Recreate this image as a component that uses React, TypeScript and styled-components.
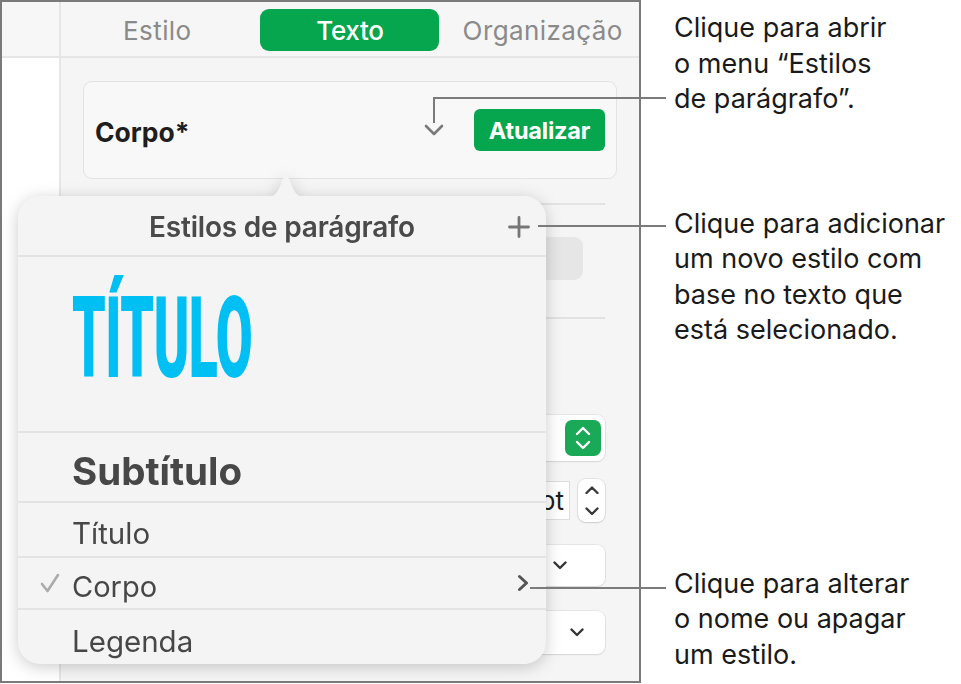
import React from "react";
import styled, { createGlobalStyle } from "styled-components";

const Global = createGlobalStyle`
  html, body { margin: 0; padding: 0; background: #ffffff; }
  body { font-family: Inter, "Noto Sans", "Liberation Sans", sans-serif; }
  * { box-sizing: border-box; }
`;

const Page = styled.div`
  position: relative;
  display: flex;
  align-items: flex-start;
  width: 961px;
  height: 684px;
  background: #fff;
`;

const Frame = styled.div`
  position: relative;
  width: 641px;
  height: 683px;
  border: 2px solid #7a7a7a;
  display: flex;
  overflow: hidden;
  background: #fff;
`;

const LeftStrip = styled.div`
  width: 59px;
  display: flex;
  flex-direction: column;
  border-right: 2px solid #e6e6e6;
`;

const StripTop = styled.div`
  height: 56px;
  background: #f7f7f7;
  border-bottom: 2px solid #e6e6e6;
`;

const Sidebar = styled.div`
  flex: 1;
  display: flex;
  flex-direction: column;
  background: #f5f5f5;
`;

const TabBar = styled.div`
  height: 56px;
  border-bottom: 2px solid #e6e6e6;
  display: grid;
  grid-template-columns: repeat(3, 1fr);
  align-items: center;
  background: #f6f6f6;
`;

const Tab = styled.div<{ $active?: boolean }>`
  justify-self: center;
  width: ${(p) => (p.$active ? "179px" : "auto")};
  height: 42px;
  border-radius: 9px;
  display: flex;
  align-items: center;
  justify-content: center;
  font-size: 26px;
  font-weight: ${(p) => (p.$active ? 500 : 400)};
  letter-spacing: ${(p) => (p.$active ? "-0.3px" : "0.4px")};
  color: ${(p) => (p.$active ? "#ffffff" : "#8a8a8a")};
  background: ${(p) => (p.$active ? "#06a64f" : "transparent")};
  margin-top: 2px;
`;

const StyleCard = styled.div`
  margin: 23px 22px 0 22px;
  height: 98px;
  border: 1px solid #e3e3e3;
  border-radius: 9px;
  background: #f8f8f8;
  display: flex;
  align-items: center;
  padding: 0 11px 0 11px;
`;

const StyleName = styled.div`
  flex: 1;
  font-size: 26.5px;
  font-weight: 700;
  color: #1e1e1e;
  margin-top: 4px;
`;

const ChevronBox = styled.div`
  width: 22px;
  height: 18px;
  margin-right: 29px;
  display: flex;
  align-items: center;
  justify-content: center;
`;

const UpdateButton = styled.div`
  height: 42px;
  width: 131px;
  border-radius: 6px;
  background: #06a64f;
  color: #fff;
  font-size: 23.5px;
  font-weight: 700;
  letter-spacing: -0.2px;
  display: flex;
  align-items: center;
  justify-content: center;
`;

const Controls = styled.div`
  display: flex;
  flex-direction: column;
  padding: 0 34px 0 23px;
`;

const Divider = styled.div<{ $top: number }>`
  margin-top: ${(p) => p.$top}px;
  height: 2px;
  background: #e2e2e2;
`;

const ControlRow = styled.div<{ $top: number }>`
  margin-top: ${(p) => p.$top}px;
  display: flex;
  justify-content: flex-end;
  align-items: center;
  gap: 8px;
`;

const GrayButton = styled.div`
  width: 180px;
  height: 43px;
  margin-right: 22px;
  border-radius: 9px;
  background: #e6e6e6;
`;

const WhiteBox = styled.div<{ $w: number; $h: number }>`
  width: ${(p) => p.$w}px;
  height: ${(p) => p.$h}px;
  border-radius: 8px;
  background: #fff;
  box-shadow: 0 0 0 1px rgba(0, 0, 0, 0.06), 0 1px 2px rgba(0, 0, 0, 0.08);
  display: flex;
  align-items: center;
  justify-content: flex-end;
  padding-right: 4px;
`;

const GreenStepper = styled.div`
  width: 36px;
  height: 36px;
  border-radius: 7px;
  background: #1aa957;
  display: flex;
  align-items: center;
  justify-content: center;
`;

const PtField = styled.div`
  width: 170px;
  height: 39px;
  background: #fff;
  border: 1px solid #dedede;
  display: flex;
  align-items: center;
  justify-content: flex-end;
  padding-right: 5px;
  font-size: 26px;
  color: #1e1e1e;
`;

const SmallStepper = styled.div`
  width: 27px;
  height: 43px;
  border-radius: 8px;
  background: #fff;
  box-shadow: 0 0 0 1px rgba(0, 0, 0, 0.07), 0 1px 2px rgba(0, 0, 0, 0.1);
  display: flex;
  flex-direction: column;
  align-items: center;
  justify-content: space-around;
`;

const DropChevron = styled.div<{ $right: number }>`
  margin-right: ${(p) => p.$right}px;
  display: flex;
`;

const Popover = styled.div`
  position: absolute;
  left: 16px;
  top: 194px;
  width: 528px;
  height: 468px;
  filter: drop-shadow(0 3px 8px rgba(0, 0, 0, 0.2));
`;

const PopBody = styled.div`
  position: relative;
  height: 100%;
  border-radius: 22px;
  background: #f4f4f4;
  display: flex;
  flex-direction: column;
  overflow: hidden;
`;

const Arrow = styled.svg`
  position: absolute;
  left: 246px;
  top: -25px;
  width: 44px;
  height: 27px;
`;

const PopHeader = styled.div`
  height: 61px;
  border-bottom: 2px solid #e3e3e3;
  display: flex;
  align-items: center;
  justify-content: center;
  position: relative;
  font-size: 28px;
  font-weight: 600;
  letter-spacing: -0.2px;
  color: #4a4a4a;
  padding-top: 2px;
`;

const PlusIcon = styled.svg`
  position: absolute;
  right: 16px;
  top: 20px;
`;

const StyleRow = styled.div<{ $h: number }>`
  height: ${(p) => p.$h}px;
  border-bottom: 2px solid #e3e3e3;
  display: flex;
  align-items: center;
  padding-left: 54px;
  padding-top: 7px;
  position: relative;
  &:last-child { border-bottom: none; }
`;

const TitleRow = styled(StyleRow)`
  padding-top: 0;
`;

const BigTitle = styled.div`
  font-family: Roboto, "Liberation Sans", sans-serif;
  font-weight: 900;
  font-size: 114px;
  line-height: 1;
  color: #00bff2;
  transform: scaleX(0.47);
  transform-origin: left center;
  margin-top: -12px;
  letter-spacing: -1px;
`;

const RowText = styled.div<{ $size: number; $weight: number }>`
  font-size: ${(p) => p.$size}px;
  font-weight: ${(p) => p.$weight};
  color: #474747;
`;

const CheckMark = styled.svg`
  position: absolute;
  left: 22px;
  top: 50%;
  transform: translateY(-50%);
`;

const RowChevron = styled.svg`
  position: absolute;
  right: 17px;
  top: 50%;
  transform: translateY(-50%);
`;

const Callouts = styled.div`
  display: flex;
  flex-direction: column;
  margin-left: 33px;
`;

const Callout = styled.div<{ $top: number }>`
  margin-top: ${(p) => p.$top}px;
  font-size: 27px;
  line-height: 35.5px;
  color: #1a1a1a;
  white-space: pre;
`;

const Leader = styled.div<{ $x: number; $y: number; $w: number; $h: number }>`
  position: absolute;
  left: ${(p) => p.$x}px;
  top: ${(p) => p.$y}px;
  width: ${(p) => p.$w}px;
  height: ${(p) => p.$h}px;
  background: #7b7b7b;
`;

const ChevDown = ({ size = 14, color = "#3a3a3a", sw = 2.4 }: { size?: number; color?: string; sw?: number }) => (
  <svg width={size} height={size * 0.6} viewBox="0 0 14 8.4">
    <path d="M1.5 1.5 L7 7 L12.5 1.5" fill="none" stroke={color} strokeWidth={sw} strokeLinecap="round" strokeLinejoin="round" />
  </svg>
);

const ChevUp = ({ size = 14, color = "#3a3a3a", sw = 2.4 }: { size?: number; color?: string; sw?: number }) => (
  <svg width={size} height={size * 0.6} viewBox="0 0 14 8.4">
    <path d="M1.5 7 L7 1.5 L12.5 7" fill="none" stroke={color} strokeWidth={sw} strokeLinecap="round" strokeLinejoin="round" />
  </svg>
);

export default function App() {
  return (
    <Page>
      <Global />
      <Frame>
        <LeftStrip>
          <StripTop />
        </LeftStrip>
        <Sidebar>
          <TabBar>
            <Tab>Estilo</Tab>
            <Tab $active>Texto</Tab>
            <Tab>Organização</Tab>
          </TabBar>
          <StyleCard>
            <StyleName>Corpo*</StyleName>
            <ChevronBox>
              <svg width="20" height="14" viewBox="0 0 20 14">
                <path d="M2 3 L10 11 L18 3" fill="none" stroke="#7a7a7a" strokeWidth="2.6" strokeLinecap="round" strokeLinejoin="round" />
              </svg>
            </ChevronBox>
            <UpdateButton>Atualizar</UpdateButton>
          </StyleCard>
          <Controls>
            <Divider $top={24} />
            <ControlRow $top={32}>
              <GrayButton />
            </ControlRow>
            <Divider $top={37} />
            <ControlRow $top={96}>
              <WhiteBox $w={265} $h={46}>
                <GreenStepper>
                  <svg width="18" height="26" viewBox="0 0 18 26">
                    <path d="M3 9 L9 3 L15 9" fill="none" stroke="#fff" strokeWidth="2.4" strokeLinecap="round" strokeLinejoin="round" />
                    <path d="M3 17 L9 23 L15 17" fill="none" stroke="#fff" strokeWidth="2.4" strokeLinecap="round" strokeLinejoin="round" />
                  </svg>
                </GreenStepper>
              </WhiteBox>
            </ControlRow>
            <ControlRow $top={18}>
              <PtField>pt</PtField>
              <SmallStepper>
                <ChevUp size={14} />
                <ChevDown size={14} />
              </SmallStepper>
            </ControlRow>
            <ControlRow $top={23}>
              <WhiteBox $w={265} $h={41}>
                <DropChevron $right={34}>
                  <ChevDown size={14} color="#333" />
                </DropChevron>
              </WhiteBox>
            </ControlRow>
            <ControlRow $top={25}>
              <WhiteBox $w={265} $h={43}>
                <DropChevron $right={17}>
                  <ChevDown size={14} color="#333" />
                </DropChevron>
              </WhiteBox>
            </ControlRow>
          </Controls>
        </Sidebar>

        <Popover>
          <Arrow viewBox="0 0 44 27">
            <path d="M0 27 C10 27 14 22 18 10 C20 4 24 4 26 10 C30 22 34 27 44 27 Z" fill="#f4f4f4" />
          </Arrow>
          <PopBody>
            <PopHeader>
              Estilos de parágrafo
              <PlusIcon width="22" height="22" viewBox="0 0 22 22">
                <path d="M11 1.5 V20.5 M1.5 11 H20.5" stroke="#767676" strokeWidth="2.8" strokeLinecap="round" />
              </PlusIcon>
            </PopHeader>
            <TitleRow $h={176}>
              <BigTitle>TÍTULO</BigTitle>
            </TitleRow>
            <StyleRow $h={70}>
              <RowText $size={38.5} $weight={700}>Subtítulo</RowText>
            </StyleRow>
            <StyleRow $h={55}>
              <RowText $size={29.5} $weight={400}>Título</RowText>
            </StyleRow>
            <StyleRow $h={52}>
              <CheckMark width="20" height="20" viewBox="0 0 20 20">
                <path d="M2 11 L7.5 18 L18 2" fill="none" stroke="#ababab" strokeWidth="2.6" strokeLinecap="round" strokeLinejoin="round" />
              </CheckMark>
              <RowText $size={29} $weight={400}>Corpo</RowText>
              <RowChevron width="12" height="18" viewBox="0 0 12 18">
                <path d="M2.5 2.5 L9.5 9 L2.5 15.5" fill="none" stroke="#555" strokeWidth="3" strokeLinecap="round" strokeLinejoin="round" />
              </RowChevron>
            </StyleRow>
            <StyleRow $h={54}>
              <RowText $size={29.5} $weight={400}>Legenda</RowText>
            </StyleRow>
          </PopBody>
        </Popover>
      </Frame>

      <Callouts>
        <Callout $top={10}>{"Clique para abrir\no menu “Estilos\nde parágrafo”."}</Callout>
        <Callout $top={89}>{"Clique para adicionar\num novo estilo com\nbase no texto que\nestá selecionado."}</Callout>
        <Callout $top={218}>{"Clique para alterar\no nome ou apagar\num estilo."}</Callout>
      </Callouts>

      <Leader $x={433} $y={97} $w={2} $h={26} />
      <Leader $x={433} $y={97} $w={233} $h={2} />
      <Leader $x={538} $y={225} $w={128} $h={2} />
      <Leader $x={530} $y={587} $w={136} $h={2} />
    </Page>
  );
}
